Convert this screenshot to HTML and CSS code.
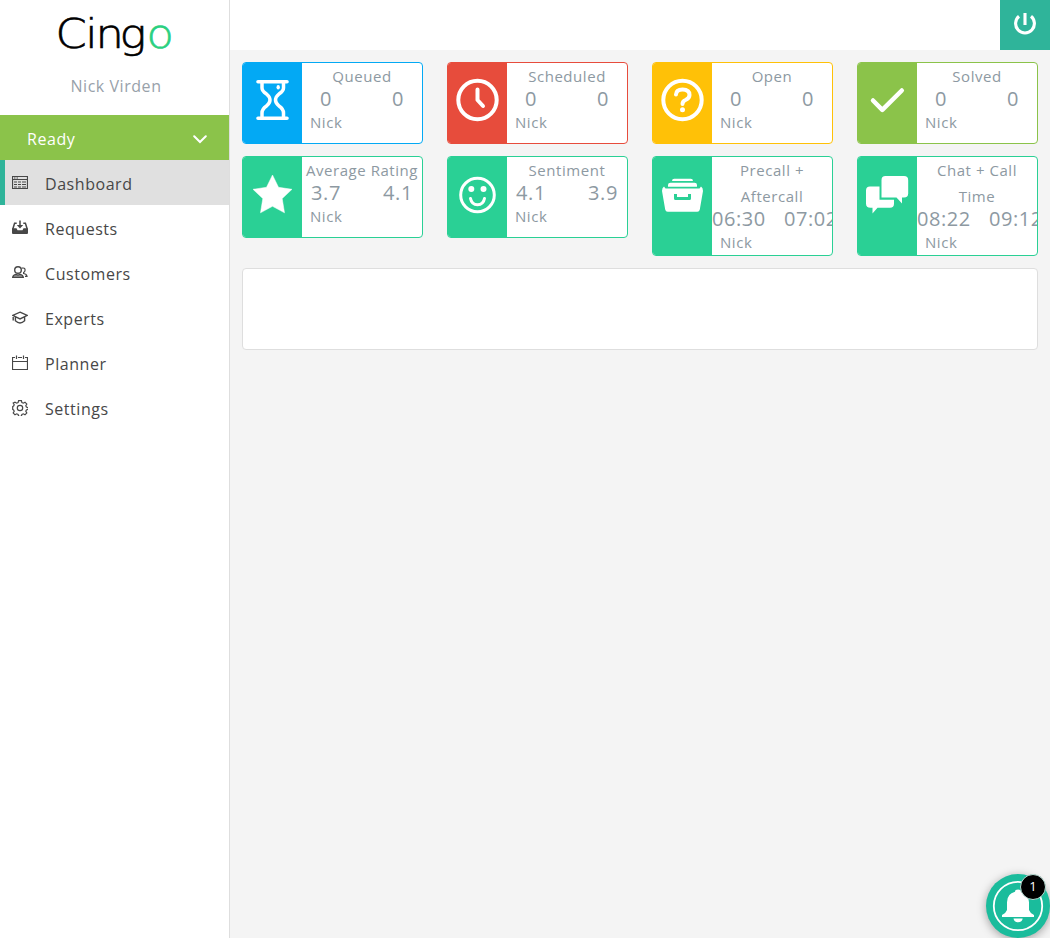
FILE: index.html
```html
<!DOCTYPE html>
<html lang="en">
<head>
<meta charset="utf-8">
<title>Cingo</title>
<link rel="stylesheet" href="styles.css">
</head>
<body>
<div class="app">
  <aside class="sidebar">
    <svg class="logo" width="124" height="48" viewBox="0 0 124 48" role="img" aria-label="Cingo"><text class="logo-text" transform="scale(1.12 1)" y="36" x="-0.4 26.2 35.2 56.8 80.8">Cing<tspan class="logo-o">o</tspan></text></svg>
    <div class="user">Nick Virden</div>
    <div class="status"><span>Ready</span>
      <svg width="14" height="9" viewBox="0 0 14 9"><path d="M1.2 1.2 7 7l5.8-5.8" fill="none" stroke="#fff" stroke-width="2" stroke-linecap="round"/></svg>
    </div>
    <nav class="menu">
      <a class="item active"><svg viewBox="0 0 16 16" class="ico"><path d="M.5 1.500h15v12H.5zM0 4.500h16" class="line"/><path d="M2 3h1.500M4.500 3H6M2 7h3m1 0h3m1 0h4M2 9.500h3m1 0h3m1 0h4M2 12h3m1 0h3m1 0h4" class="line"/></svg>Dashboard</a>
      <a class="item"><svg viewBox="0 0 16 16" class="ico"><path d="M0 8.200h4.500l1 2h5l1-2H16V13q0 1-1 1H1q-1 0-1-1z" fill="#474747"/><path d="M.8 9 2.600 3.200h2.100M11.300 3.200h2.100l1.800 5.800M8 .5v6" fill="none" stroke="#474747" stroke-width="1.500"/><path d="M4.800 5h6.400L8 8.500z" fill="#474747"/></svg>Requests</a>
      <a class="item"><svg viewBox="0 0 16 16" class="ico"><circle cx="6" cy="5" r="3.300" class="line bold"/><path d="M.7 12.300Q1 10 4 9.400l2 .6 2-.6q3 .6 3.300 2.900z" fill="#999" stroke="#474747" stroke-width="1.300"/><path d="M9.700 3.200q3.300-.8 3.400 1.800 0 1.600-1.500 2.500v1q3 .5 3.400 2.800h-2" class="line"/></svg>Customers</a>
      <a class="item"><svg viewBox="0 0 16 16" class="ico"><path d="M8 2.200 15.300 5.400 8 9 .7 5.400zM3.400 7v3.800Q8 15 12.600 10.800V7M1.200 5.700v4.800" class="line bold"/></svg>Experts</a>
      <a class="item"><svg viewBox="0 0 16 16" class="ico"><path d="M3 2.500H.5v12h15v-12H13M6 2.500h4M.5 6.500h15M4.500.5v3.500M11.500.5v3.500" class="line"/></svg>Planner</a>
      <a class="item"><svg viewBox="0 0 16 16" class="ico"><circle cx="8" cy="8" r="2.700" class="line"/><path d="M6.600.7h2.800l.5 1.900 1.400.6 1.700-1 1.800 1.800-1 1.700.6 1.400 1.900.5v1.800l-1.900.5-.6 1.400 1 1.700-1.800 1.800-1.700-1-1.400.6-.5 1.900H6.600l-.5-1.900-1.400-.6-1.700 1L1.200 13l1-1.700-.6-1.400-.9-.5V6.600l.9-.5.6-1.400-1-1.700L3 2.200l1.700 1 1.400-.6z" class="line"/></svg>Settings</a>
    </nav>
  </aside>
  <main class="main">
    <header class="topbar"><button class="power" aria-label="Log out"><svg width="24" height="24" viewBox="0 0 24 24"><path d="M6 4.300a9.400 9.400 0 1 0 12 0M12 1v12" fill="none" stroke="#fff" stroke-width="3.100"/></svg></button></header>
    <section class="cards">
      <article class="card blue"><div class="badge"><svg width="60" height="80" viewBox="0 0 60 80"><path d="M16 18.700h29M16 55.300h29" stroke="#fff" stroke-width="3.600" stroke-linecap="round"/><path d="M20 19V25Q20 28 24.500 31Q28 34 28 37Q28 40 24.500 43Q20 46 20 50V55M41.500 19V25Q41.500 28 37 31Q33.500 34 33.500 37Q33.500 40 37 43Q41.500 46 41.500 50V55" class="white glass"/><ellipse cx="36.200" cy="24.300" rx="1.700" ry="2.200" fill="#fff"/></svg></div><div class="body"><h3>Queued</h3><div class="nums"><b>0</b><b>0</b></div><p>Nick</p></div></article>
      <article class="card red"><div class="badge"><svg width="60" height="80" viewBox="0 0 60 80"><circle cx="30.500" cy="37" r="19.200" class="white"/><path d="M30.500 26.500V37l5.500 6" class="white"/></svg></div><div class="body"><h3>Scheduled</h3><div class="nums"><b>0</b><b>0</b></div><p>Nick</p></div></article>
      <article class="card amber"><div class="badge"><svg width="60" height="80" viewBox="0 0 60 80"><circle cx="30.500" cy="37" r="19.200" class="white"/><path d="M24 31.500q.3-5 6.500-5 7 0 7 5.500 0 3.200-4 5-3 1.200-3 4" class="white"/><circle cx="30.500" cy="46.800" r="2.500" fill="#fff"/></svg></div><div class="body"><h3>Open</h3><div class="nums"><b>0</b><b>0</b></div><p>Nick</p></div></article>
      <article class="card lime"><div class="badge"><svg width="60" height="80" viewBox="0 0 60 80"><path d="m16 37.500 9.300 9.300L44.800 27.500" class="white thick"/></svg></div><div class="body"><h3>Solved</h3><div class="nums"><b>0</b><b>0</b></div><p>Nick</p></div></article>
      <article class="card green"><div class="badge"><svg width="60" height="80" viewBox="0 0 60 80"><path d="m30.500 18 6 12.300 13.500 2-9.800 9.300 2.300 14.200-12-6.500-12 6.500 2.300-14.200L11 32.300l13.500-2z" fill="#fff" stroke="#fff" stroke-width=".5" stroke-linejoin="round"/></svg></div><div class="body"><h3>Average Rating</h3><div class="nums"><b>3.7</b><b>4.1</b></div><p>Nick</p></div></article>
      <article class="card green"><div class="badge"><svg width="60" height="80" viewBox="0 0 60 80"><circle cx="30.500" cy="38" r="16.800" class="white thin"/><circle cx="24.300" cy="32" r="3" fill="#fff"/><circle cx="36.500" cy="32" r="3" fill="#fff"/><path d="M23.500 41.500q1.200 6.200 7 6.200t7-6.200" class="white thin"/></svg></div><div class="body"><h3>Sentiment</h3><div class="nums"><b>4.1</b><b>3.9</b></div><p>Nick</p></div></article>
      <article class="card green"><div class="badge"><svg width="60" height="80" viewBox="0 0 60 80"><path d="M20 24q0-2.300 2.300-2.300h16.400Q41 21.700 41 24zM16 29.700v-1.700q0-2.300 2.500-2.300h24q2.500 0 2.500 2.300v1.700zM12 29.500l1.500 2h34l1.500-2q2 1 2 4.500L47.800 52.500q-.4 2.200-2.500 2.200H15.700q-2.100 0-2.500-2.200L10 34q0-3.500 2-4.500z" fill="#fff"/><path d="M23.500 37v4.500h14V37" fill="none" stroke="#2ad095" stroke-width="3" stroke-linejoin="round"/></svg></div><div class="body"><h3>Precall + Aftercall</h3><div class="nums"><b>06:30</b><b>07:02</b></div><p>Nick</p></div></article>
      <article class="card green"><div class="badge"><svg width="60" height="80" viewBox="0 0 60 80"><path d="M28.500 19H47q4.200 0 4.200 4.200v13.300q0 4-4.200 4H45v6l-5.500-6h-15V23.200q0-4.200 4-4.200zM13 29.500h9.500v13.300H37v4q0 4-4 4H20.500L15.500 56.500v-5.700H13.500Q9 50.800 9 46.500V33.500q0-4 4-4z" fill="#fff"/></svg></div><div class="body"><h3>Chat + Call Time</h3><div class="nums"><b>08:22</b><b>09:12</b></div><p>Nick</p></div></article>
    </section>
    <section class="panel"></section>
  </main>
</div>
<div class="bell"><svg width="64" height="64" viewBox="0 0 64 64"><circle cx="32" cy="32" r="24.200" fill="none" stroke="#fff" stroke-width="1.800"/><path d="M32 15.500q3 0 3 2.200 8 2 8 10.500V36q1.500 3.800 5 5V43H16V41q3.500-1.200 5-5V28.200Q21 19.700 29 17.700 29 15.500 32 15.500zM27.500 44.500h9.200q-.5 3.700-4.600 3.700t-4.600-3.700z" fill="#fff"/></svg><span class="count">1</span></div>
</body>
</html>
```

FILE: styles.css
```css
* { box-sizing: border-box; }
html, body { margin: 0; height: 100%; overflow: hidden; }
body { font-family: "Open Sans", sans-serif; background: #f4f4f4; color: #474747; }
.app { display: flex; height: 938px; }
.sidebar { width: 230px; background: #fff; border-right: 1px solid #dedede; display: flex; flex-direction: column; }
.logo { display: block; margin: 12px 0 -2px 56px; overflow: visible; }
.logo-text { font: 200 40px "DejaVu Sans", "DejaVu Sans Light", sans-serif; fill: #000; stroke: #000; stroke-width: .6px; }
.logo-o { fill: #2ad080; stroke: #2ad080; }
.user { height: 57px; padding: 14px 0 0 3px; text-align: center; font-size: 16px; line-height: 28px; letter-spacing: .55px; color: #98a1aa; }
.status { height: 45px; background: #8bc34a; color: #fff; display: flex; align-items: center; justify-content: space-between; padding: 3px 22px 0 27px; font-size: 16px; letter-spacing: .55px; }
.item { height: 45px; display: flex; align-items: center; gap: 17px; padding: 3px 0 0 12px; font-size: 16px; letter-spacing: .55px; }
.item.active { background: #e0e0e0; border-left: 5px solid #2fb49a; padding-left: 7px; }
.ico { width: 16px; height: 16px; margin-bottom: 3px; }
.line { fill: none; stroke: #474747; stroke-width: 1.2; }
.bold { stroke-width: 1.4; }
.main { flex: 1; min-width: 0; }
.topbar { height: 50px; background: #fff; display: flex; justify-content: flex-end; }
.power { width: 50px; height: 50px; border: 0; padding: 0 1px 3px 0; background: #2fb49a; display: flex; align-items: center; justify-content: center; }
.cards { display: grid; grid-template-columns: repeat(4, 181px); gap: 12px 24px; padding: 12px; align-items: start; }
.card { --c: #2ad095; display: flex; min-height: 82px; border: 1px solid var(--c); border-radius: 4px; background: #fff; overflow: hidden; }
.blue { --c: #03a9f4; }
.red { --c: #e74c3c; }
.amber { --c: #ffc107; }
.lime { --c: #8bc34a; }
.badge { width: 59px; flex: none; background: var(--c); overflow: hidden; }
.badge svg { display: block; margin-left: -1px; }
.white { fill: none; stroke: #fff; stroke-width: 4; stroke-linecap: round; stroke-linejoin: round; }
.glass { stroke-width: 3.5; }
.thin { stroke-width: 3; }
.thick { stroke-width: 4.5; }
.body { width: 120px; flex: none; color: #8d99a2; }
.body h3 { margin: 0; text-align: center; font-weight: 400; font-size: 15px; line-height: 26px; letter-spacing: .55px; }
.nums { display: flex; gap: 24px; height: 20px; }
.nums b { width: 48px; flex: none; display: flex; justify-content: safe center; font-weight: 400; font-size: 20px; line-height: 20px; letter-spacing: .55px; }
.body p { margin: 0; padding-left: 8px; font-size: 15px; line-height: 26px; letter-spacing: .55px; }
.panel { height: 82px; margin: 0 12px; background: #fff; border: 1px solid #dedede; border-radius: 4px; }
.bell { position: absolute; left: 986px; top: 874px; width: 64px; height: 64px; border-radius: 50%; background: #1abc9c; box-shadow: 0 2px 10px rgba(0,0,0,.35); }
.count { position: absolute; left: 34px; top: 0; width: 26px; height: 26px; border-radius: 50%; background: #000; border: 1px solid #b8ded5; color: #fff; font-size: 13px; line-height: 23px; text-align: center; }
```
